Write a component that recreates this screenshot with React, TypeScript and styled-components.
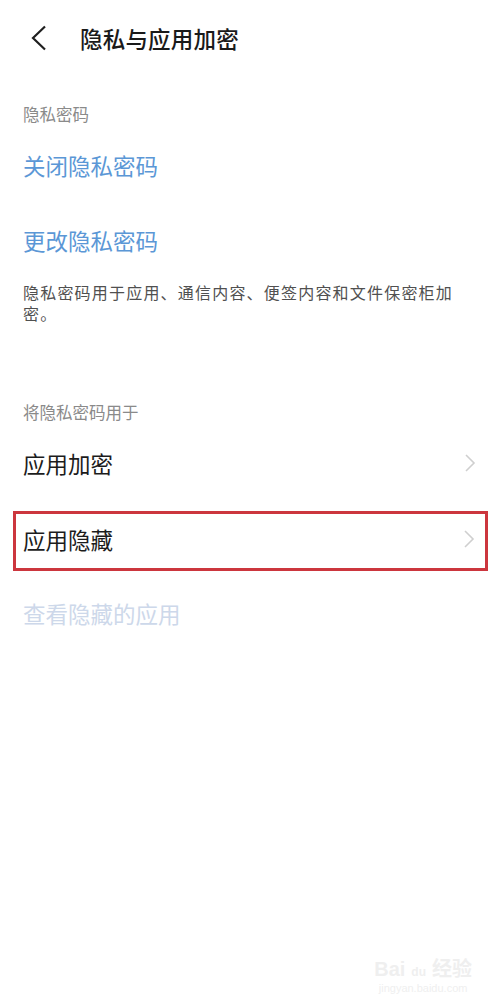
import React from "react";
import styled, { createGlobalStyle } from "styled-components";

// Types -------------------------------------------------------------------------

interface Item {
  label: string;
  highlight?: boolean;
}

const usage: Item[] = [{ label: "应用加密" }, { label: "应用隐藏", highlight: true }];

// Component ---------------------------------------------------------------------

const Chevron = () => (
  <svg width="12" height="20" viewBox="0 0 12 20">
    <path d="M2 2 L10 10 L2 18" fill="none" stroke="#cfcfcf" strokeWidth="1.6" />
  </svg>
);

const App: React.FC = () => {
  return (
    <>
      <GlobalStyle />
      <Page>
        <Header>
          <BackButton>
            <svg width="16" height="26" viewBox="0 0 16 26">
              <path d="M14 1.5 L2 13 L14 24.5" fill="none" stroke="#1f1f1f" strokeWidth="2.2" />
            </svg>
          </BackButton>
          <Title>隐私与应用加密</Title>
        </Header>

        <SectionLabel $top={24}>隐私密码</SectionLabel>
        <Row>
          <LinkText>关闭隐私密码</LinkText>
        </Row>
        <Row>
          <LinkText>更改隐私密码</LinkText>
        </Row>
        <Description>隐私密码用于应用、通信内容、便签内容和文件保密柜加密。</Description>

        <SectionLabel $top={74}>将隐私密码用于</SectionLabel>
        {usage.map((item) => (
          <Row key={item.label} $highlight={item.highlight}>
            <ItemText>{item.label}</ItemText>
            <Chevron />
          </Row>
        ))}
        <Row>
          <LinkText $disabled>查看隐藏的应用</LinkText>
        </Row>

        <Watermark>
          <span>Bai<Paw>du</Paw>经验</span>
          <small>jingyan.baidu.com</small>
        </Watermark>
      </Page>
    </>
  );
};

export default App;

// Styled ------------------------------------------------------------------------

const GlobalStyle = createGlobalStyle`
  body {
    margin: 0;
    background: #ffffff;
    font-family: "Noto Sans CJK SC", "Noto Sans", sans-serif;
  }
`;

const Page = styled.div`
  position: relative;
  width: 500px;
  min-height: 1008px;
  box-sizing: border-box;
  padding: 0 24px 0 23px;
  display: flex;
  flex-direction: column;
  overflow: hidden;
`;

const Header = styled.div`
  height: 76px;
  display: flex;
  align-items: center;
`;

const BackButton = styled.div`
  width: 57px;
  padding-left: 8px;
  box-sizing: border-box;
  display: flex;
  align-items: center;
`;

const Title = styled.h1`
  margin: 0;
  font-size: 22.5px;
  font-weight: 500;
  color: #1a1a1a;
  letter-spacing: 0.2px;
`;

const SectionLabel = styled.div<{ $top: number }>`
  padding-top: ${({ $top }) => $top}px;
  padding-bottom: 2px;
  line-height: 28px;
  font-size: 16.5px;
  color: #8a8a8a;
`;

const Row = styled.div<{ $highlight?: boolean }>`
  height: 75px;
  padding-bottom: 5px;
  display: flex;
  align-items: center;
  justify-content: space-between;
  box-sizing: border-box;

  ${({ $highlight }) =>
    $highlight &&
    `
    height: 60px;
    margin: 7.5px -12px 7.5px -10px;
    padding: 0 10px 4px 7px;
    border: 3px solid #cc363e;
  `}
`;

const ItemText = styled.span`
  font-size: 22.5px;
  color: #1c1c1c;
`;

const LinkText = styled.span<{ $disabled?: boolean }>`
  font-size: 22.5px;
  color: ${({ $disabled }) => ($disabled ? "#cdd8ea" : "#5b97d6")};
`;

const Description = styled.p`
  margin: 0;
  padding-top: 2px;
  font-size: 16px;
  letter-spacing: 1.2px;
  line-height: 21px;
  color: #505050;
`;

const Watermark = styled.div`
  position: absolute;
  right: 28px;
  bottom: 14px;
  display: flex;
  flex-direction: column;
  align-items: center;
  color: #efefef;
  font-family: "Liberation Sans", "Noto Sans CJK SC", sans-serif;

  span {
    font-size: 20px;
    font-weight: 700;
  }

  small {
    font-size: 11px;
  }
`;

const Paw = styled.em`
  font-style: normal;
  font-size: 12px;
  margin: 0 6px;
`;
